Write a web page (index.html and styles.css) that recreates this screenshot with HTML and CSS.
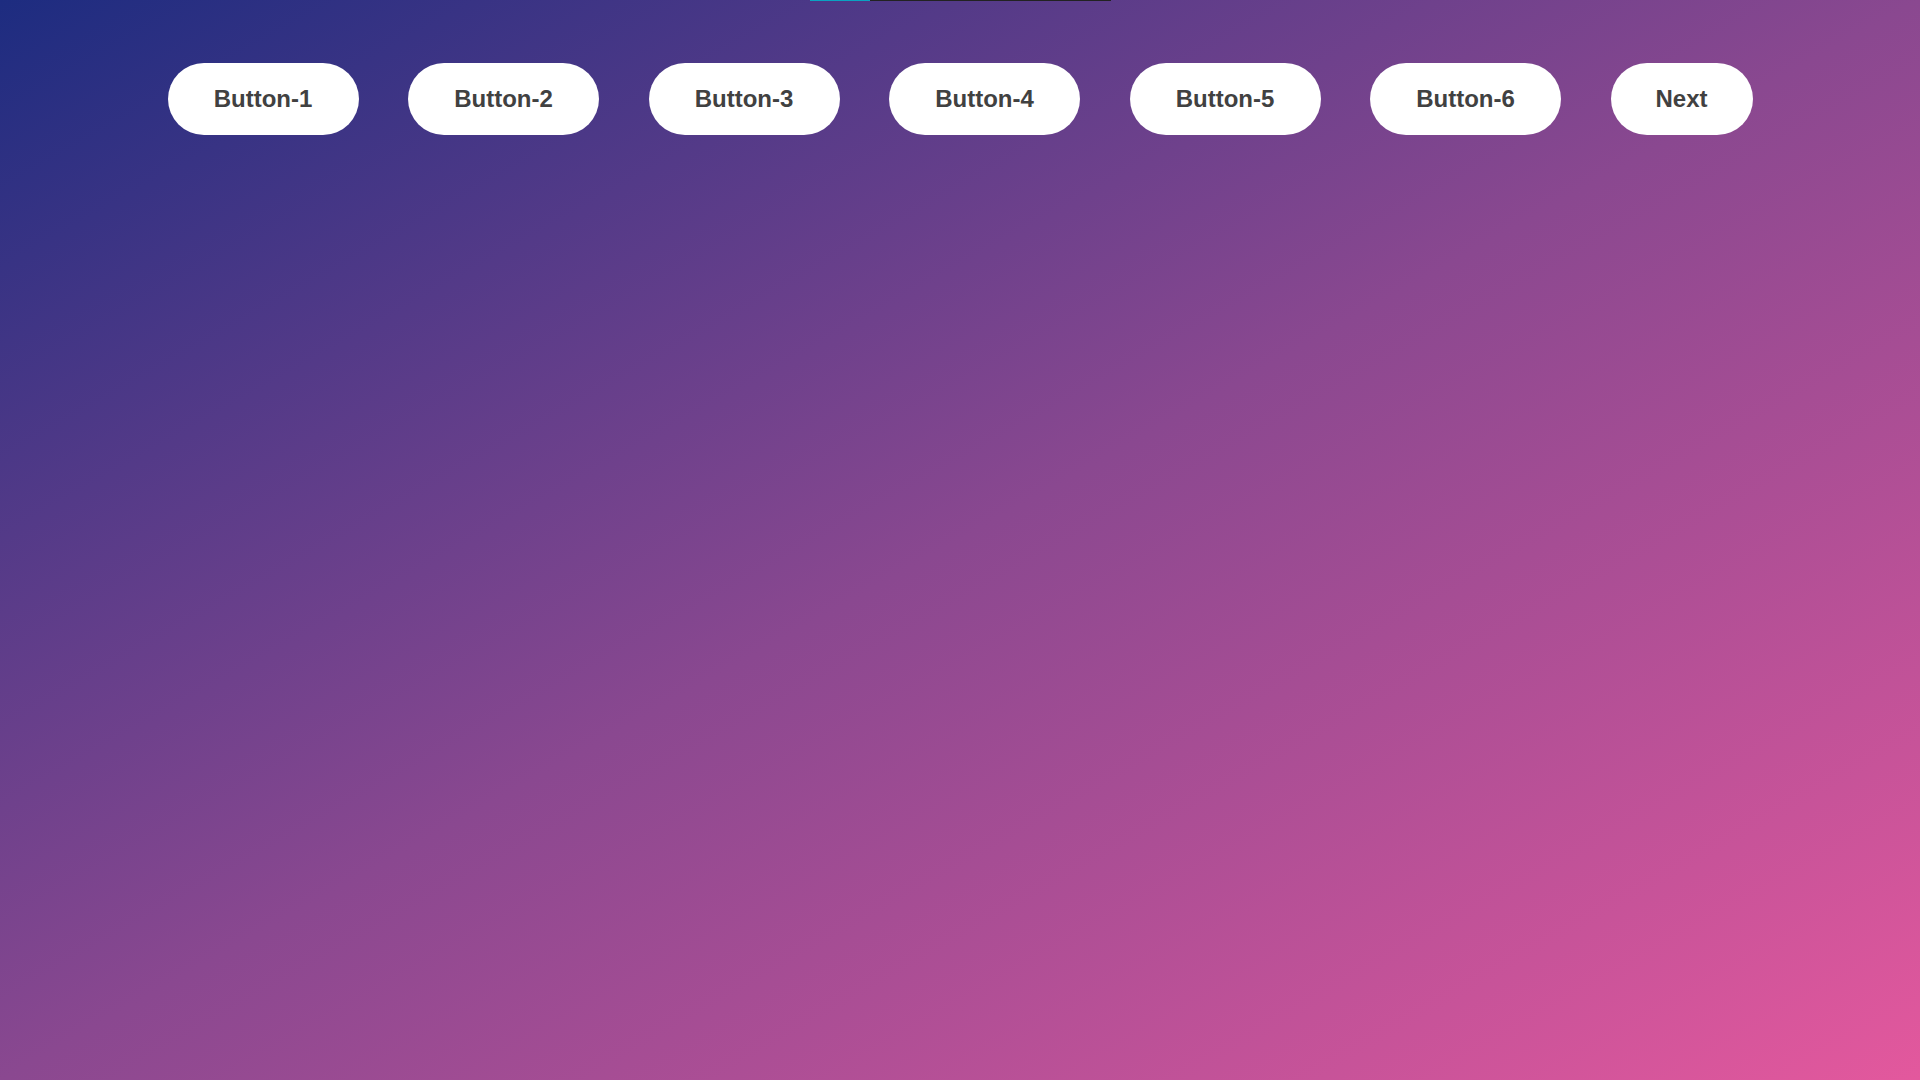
FILE: index.html
```html
<!DOCTYPE html>
<html lang="en">
<head>
<meta charset="utf-8">
<title>Buttons</title>
<link rel="stylesheet" href="styles.css">
</head>
<body>
  <div class="progress"><div class="progress-fill" style="width:20%"></div></div>
  <nav class="button-row">
    <button class="pill">Button-1</button>
    <button class="pill">Button-2</button>
    <button class="pill">Button-3</button>
    <button class="pill">Button-4</button>
    <button class="pill">Button-5</button>
    <button class="pill">Button-6</button>
    <button class="pill pill-next">Next</button>
  </nav>
</body>
</html>
```
FILE: styles.css
```css
html, body {
  margin: 0;
  padding: 0;
  height: 100%;
}
body {
  background: linear-gradient(to bottom right, #1d2c80 0%, #8a4890 50%, #e3589d 100%);
  font-family: "Liberation Sans", Arial, sans-serif;
  display: flex;
  flex-direction: column;
  align-items: center;
}
.progress {
  width: 301px;
  height: 1px;
  background: #222;
  display: flex;
}
.progress-fill {
  height: 100%;
  background: #0aa3c2;
}
.button-row {
  margin-top: 62px;
  display: flex;
  justify-content: center;
  gap: 49.5px;
}
.pill {
  width: 191px;
  height: 72px;
  padding: 0;
  border: none;
  border-radius: 36px;
  background: #fff;
  color: #414141;
  font-family: "Liberation Sans", Arial, sans-serif;
  font-weight: bold;
  font-size: 24px;
  text-align: center;
  cursor: pointer;
}
.pill-next {
  width: 142px;
}
```
